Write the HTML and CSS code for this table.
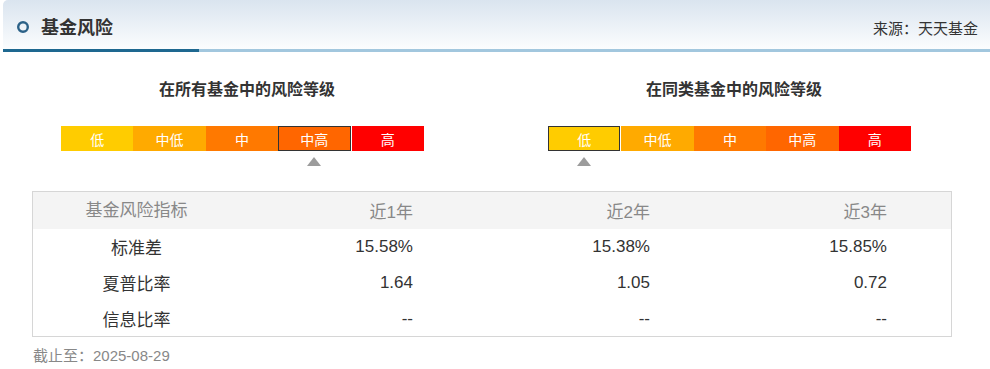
FILE: index.html
```html
<!DOCTYPE html>
<html lang="zh-CN">
<head>
<meta charset="utf-8">
<title>基金风险</title>
<link rel="stylesheet" href="styles.css">
</head>
<body>
<div class="panel">
  <div class="head">
    <div class="head-title">
      <svg class="head-icon" width="14" height="14" viewBox="0 0 14 14"><circle cx="7" cy="7" r="4.8" fill="none" stroke="#2b6187" stroke-width="2.4"/></svg>
      <span>基金风险</span>
    </div>
    <div class="head-source">来源：天天基金</div>
  </div>

  <div class="levels">
    <div class="level level-all">
      <div class="level-title">在所有基金中的风险等级</div>
      <div class="bar">
        <div class="seg s1">低</div>
        <div class="seg s2">中低</div>
        <div class="seg s3">中</div>
        <div class="seg s4 on">中高</div>
        <div class="seg s5">高</div>
      </div>
    </div>
    <div class="level level-same">
      <div class="level-title">在同类基金中的风险等级</div>
      <div class="bar">
        <div class="seg s1 on">低</div>
        <div class="seg s2">中低</div>
        <div class="seg s3">中</div>
        <div class="seg s4">中高</div>
        <div class="seg s5">高</div>
      </div>
    </div>
  </div>

  <div class="table">
    <div class="row row-head">
      <div class="c name">基金风险指标</div>
      <div class="c num">近1年</div>
      <div class="c num">近2年</div>
      <div class="c num">近3年</div>
    </div>
    <div class="row">
      <div class="c name">标准差</div>
      <div class="c num">15.58%</div>
      <div class="c num">15.38%</div>
      <div class="c num">15.85%</div>
    </div>
    <div class="row">
      <div class="c name">夏普比率</div>
      <div class="c num">1.64</div>
      <div class="c num">1.05</div>
      <div class="c num">0.72</div>
    </div>
    <div class="row">
      <div class="c name">信息比率</div>
      <div class="c num">--</div>
      <div class="c num">--</div>
      <div class="c num">--</div>
    </div>
  </div>

  <div class="date">截止至：2025-08-29</div>
</div>
</body>
</html>
```

FILE: styles.css
```css
html, body {
  margin: 0;
  padding: 0;
  background: #fff;
}
body {
  width: 990px;
  font-family: "Liberation Sans", "Noto Sans CJK SC", sans-serif;
  color: #333;
}
.panel {
  width: 990px;
}
.head {
  margin-left: 3px;
  height: 49px;
  display: flex;
  justify-content: space-between;
  align-items: stretch;
  background: linear-gradient(#dae4ef, #fbfdfe);
  border-top-left-radius: 5px;
  border-bottom: 3px solid #a2c7de;
}
.head-title {
  width: 196px;
  display: flex;
  align-items: center;
  padding-left: 13px;
  box-sizing: border-box;
  border-bottom: 3px solid #1e6890;
  margin-bottom: -3px;
  padding-top: 3px;
  font-family: "Noto Sans CJK SC", sans-serif;
  font-weight: bold;
  font-size: 18px;
  color: #333;
}
.head-icon {
  margin-right: 11px;
  margin-top: 1px;
}
.head-source {
  display: flex;
  align-items: center;
  padding-top: 6px;
  padding-right: 12px;
  font-family: "Noto Sans CJK SC", sans-serif;
  font-size: 15px;
  color: #333;
}
.levels {
  display: flex;
  margin-top: 26px;
}
.level-all {
  width: 494px;
}
.level-same {
  width: 480px;
}
.level-title {
  text-align: center;
  font-family: "Noto Sans CJK SC", sans-serif;
  font-weight: bold;
  font-size: 16px;
  line-height: 20px;
  height: 20px;
  color: #333;
}
.bar {
  display: flex;
  margin-top: 28px;
  height: 25px;
}
.level-all .bar {
  margin-left: 61px;
}
.level-same .bar {
  margin-left: 54px;
}
.seg {
  width: 72.4px;
  height: 25px;
  box-sizing: border-box;
  display: flex;
  align-items: center;
  justify-content: center;
  color: #fff;
  font-family: "Noto Sans CJK SC", sans-serif;
  font-size: 14px;
  position: relative;
}
.s1 { background: #ffcc00; }
.s2 { background: #ffaa00; }
.s3 { background: #ff7900; }
.s4 { background: #ff6600; }
.s5 { background: #ff0000; }
.seg.on {
  border: 1px solid #333;
  margin-right: 1px;
}
.seg.on::after {
  content: "";
  position: absolute;
  left: 50%;
  top: 30px;
  margin-left: -7.5px;
  border-left: 7.5px solid transparent;
  border-right: 7.5px solid transparent;
  border-bottom: 9px solid #9c9c9c;
}
.table {
  margin: 40px 0 0 32px;
  width: 918px;
  border: 1px solid #d6d6d6;
  font-size: 17px;
}
.row {
  display: grid;
  grid-template-columns: 207px 237px 237px 237px;
  height: 36px;
  align-items: center;
  color: #333;
}
.row-head {
  height: 37px;
  background: #f4f4f4;
  color: #888;
}
.row:last-child {
  height: 35px;
}
.c.name {
  text-align: center;
  font-family: "Noto Sans CJK SC", sans-serif;
  line-height: 22px;
}
.row-head .c {
  font-family: "Liberation Sans", "Noto Sans CJK SC", sans-serif;
}
.c.num {
  text-align: right;
  padding-right: 64px;
}
.date {
  margin: 9px 0 0 33px;
  font-size: 15px;
  line-height: 20px;
  color: #888;
}
```
